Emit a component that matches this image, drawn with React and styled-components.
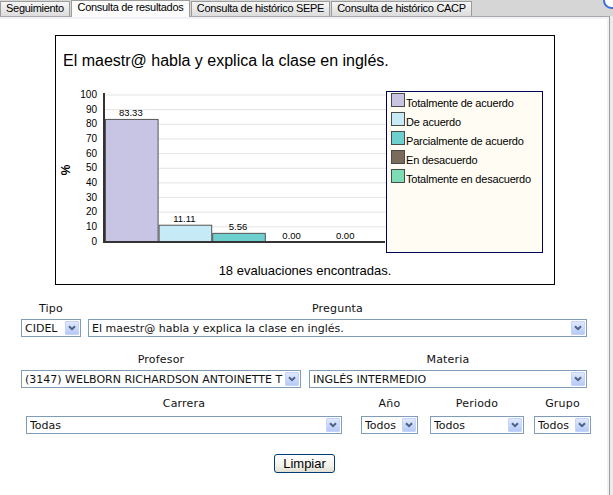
import React from 'react'
import styled, { createGlobalStyle } from 'styled-components'

const GlobalStyle = createGlobalStyle`
  body {
    margin: 0;
    background: #ececec;
  }
`

const Page = styled.div`
  position: relative;
  width: 613px;
  height: 495px;
  overflow: hidden;
  background: #ececec;
  font-family: "Liberation Sans", Arial, sans-serif;
`

const TabBar = styled.div`
  position: relative;
  display: flex;
  align-items: flex-end;
  gap: 1px;
  height: 16px;
  background: #d6d6d6;
`

const Tab = styled.div`
  position: relative;
  z-index: ${p => (p.$active ? 2 : 1)};
  box-sizing: border-box;
  width: ${p => p.$w}px;
  height: ${p => (p.$active ? 17 : 15)}px;
  margin-bottom: ${p => (p.$active ? -1 : 0)}px;
  border: 1px solid #9c9c9c;
  border-bottom: none;
  background: ${p => (p.$active ? '#fbfbfb' : 'linear-gradient(#f6f6f6, #dcdcdc)')};
  font-size: 11px;
  line-height: 12px;
  letter-spacing: -0.3px;
  text-align: center;
  white-space: nowrap;
  color: #000;
`

// the round corner of a window button peeking in at top right
const CornerBadge = styled.span`
  position: absolute;
  top: -8px;
  right: -7px;
  width: 13px;
  height: 13px;
  border-radius: 50%;
  border: 2px solid #3f72d6;
  background: #fff;
`

const Panel = styled.div`
  box-sizing: border-box;
  width: 610px;
  height: 479px;
  display: flex;
  flex-direction: column;
  background: #fff;
  border-top: 1px solid #a8a8a8;
  border-right: 1px solid #9c9c9c;
  box-shadow: inset 0 2px 0 #f1f1fa, inset -2px 0 0 #f1f1fa;
`

const ChartBox = styled.div`
  box-sizing: border-box;
  width: 500px;
  height: 250px;
  margin: 18px 0 0 55px;
  border: 1px solid #000;
  display: flex;
  flex-direction: column;
`

const ChartTitle = styled.div`
  margin: 16px 0 0 7px;
  font-size: 16px;
  line-height: 18px;
  color: #000;
`

const PlotRow = styled.div`
  display: flex;
  height: 168px;
  margin-top: 15px;
`

const Legend = styled.div`
  box-sizing: border-box;
  width: 157px;
  height: 162px;
  margin-top: 6px;
  padding: 1px 0 0 4px;
  border: 1px solid #00005a;
  background: #fffcf3;
`

const LegendItem = styled.div`
  display: flex;
  align-items: flex-start;
  height: 19px;
`

const Swatch = styled.span`
  box-sizing: border-box;
  width: 14px;
  height: 14px;
  border: 1px solid #4a4a4a;
  background: ${p => p.$color};
`

const LegendText = styled.span`
  margin: 4px 0 0 1px;
  font-size: 11px;
  line-height: 13px;
  letter-spacing: -0.2px;
  color: #000;
`

const Caption = styled.div`
  margin-top: 10px;
  font-size: 13px;
  line-height: 15px;
  text-align: center;
  color: #000;
`

const Form = styled.div`
  display: flex;
  flex-direction: column;
  margin-top: 17px;
`

const Row = styled.div`
  display: flex;
  gap: ${p => p.$gap || 0}px;
  margin-top: ${p => p.$mt || 0}px;
  padding-left: ${p => p.$pl}px;
`

const Field = styled.div`
  display: flex;
  flex-direction: column;
  align-items: center;
  gap: ${p => p.$gap}px;
  margin-left: ${p => p.$ml || 0}px;
`

const FieldLabel = styled.div`
  font-family: "DejaVu Sans", Verdana, sans-serif;
  font-size: 11px;
  line-height: 13px;
  letter-spacing: 0.2px;
  color: #111;
`

const SelectBox = styled.div`
  box-sizing: border-box;
  display: flex;
  align-items: center;
  width: ${p => p.$w}px;
  height: 18px;
  padding: 0 1px 0 3px;
  border: 1px solid #7f9db9;
  background: #fff;
  font-family: "DejaVu Sans", Verdana, sans-serif;
  font-size: 11px;
  line-height: 13px;
  letter-spacing: 0;
  color: #111;
`

const SelectText = styled.span`
  flex: 1;
  min-width: 0;
  overflow: hidden;
  white-space: nowrap;
`

const DropButton = styled.span`
  box-sizing: border-box;
  flex: none;
  display: flex;
  align-items: center;
  justify-content: center;
  width: 14px;
  height: 14px;
  border: 1px solid #c3d3fd;
  border-radius: 1px;
  background: linear-gradient(#dfe8fe, #b6caf7);
`

const ButtonRow = styled.div`
  display: flex;
  justify-content: center;
  margin-top: 20px;
`

const Button = styled.button`
  box-sizing: border-box;
  width: 61px;
  height: 19px;
  padding: 0;
  border: 1px solid #003c74;
  border-radius: 3px;
  background: linear-gradient(#ffffff, #f3f2ec 60%, #e2dfd2);
  font-family: "Liberation Sans", Arial, sans-serif;
  font-size: 13px;
  line-height: 15px;
  color: #000;
`

const series = [
  { label: 'Totalmente de acuerdo', value: 83.33, color: '#c8c4e4' },
  { label: 'De acuerdo', value: 11.11, color: '#c6eaf6' },
  { label: 'Parcialmente de acuerdo', value: 5.56, color: '#6ecfcf' },
  { label: 'En desacuerdo', value: 0, color: '#7b6b5a' },
  { label: 'Totalmente en desacuerdo', value: 0, color: '#7ddcb4' },
]

const ZERO = 156
const UNIT = 1.465
const AXIS_X = 48
const BAR_W = 53.6

const Chevron = () => (
  <svg width="8" height="6" viewBox="0 0 8 6">
    <path d="M1 1.2 L4 4.2 L7 1.2" fill="none" stroke="#4d6185" strokeWidth="2" />
  </svg>
)

const Select = ({ w, children }) => (
  <SelectBox $w={w}>
    <SelectText>{children}</SelectText>
    <DropButton>
      <Chevron />
    </DropButton>
  </SelectBox>
)

const BarChart = () => {
  const ticks = [0, 10, 20, 30, 40, 50, 60, 70, 80, 90, 100]
  return (
    <svg width="330" height="168" fontFamily='"Liberation Sans", Arial, sans-serif'>
      {ticks.slice(1).map(t => (
        <line key={t} x1={AXIS_X} x2="330" y1={ZERO - t * UNIT + 0.5} y2={ZERO - t * UNIT + 0.5} stroke="#e4e4e4" />
      ))}
      {ticks.map(t => (
        <text key={t} x="41" y={ZERO - t * UNIT + 3.5} fontSize="10" textAnchor="end" fill="#000">
          {t}
        </text>
      ))}
      <text x="14" y="85" fontSize="12" fontWeight="bold" textAnchor="middle" transform="rotate(-90 14 85)">
        %
      </text>
      {series.map((s, i) => {
        const x = AXIS_X + 1 + i * BAR_W
        const h = s.value * UNIT
        return (
          <g key={s.label}>
            {h > 0 && (
              <rect x={x + 0.5} y={ZERO - h + 0.5} width={BAR_W - 1} height={h} fill={s.color} stroke="#555" />
            )}
            <text x={x + BAR_W / 2 - 1} y={ZERO - h - 2.5} fontSize="9.5" textAnchor="middle" fill="#000">
              {s.value.toFixed(2)}
            </text>
          </g>
        )
      })}
      <rect x={AXIS_X - 1} y="8" width="2" height="150" fill="#333" />
      <rect x={AXIS_X - 1} y={ZERO} width={330 - AXIS_X} height="2" fill="#333" />
    </svg>
  )
}

const tabs = [
  { label: 'Seguimiento', w: 70 },
  { label: 'Consulta de resultados', w: 119, active: true },
  { label: 'Consulta de histórico SEPE', w: 139 },
  { label: 'Consulta de histórico CACP', w: 141 },
]

const App = () => (
  <Page>
    <GlobalStyle />
    <TabBar>
      {tabs.map(t => (
        <Tab key={t.label} $w={t.w} $active={t.active}>
          {t.label}
        </Tab>
      ))}
      <CornerBadge />
    </TabBar>
    <Panel>
      <ChartBox>
        <ChartTitle>El maestr@ habla y explica la clase en inglés.</ChartTitle>
        <PlotRow>
          <BarChart />
          <Legend>
            {series.map(s => (
              <LegendItem key={s.label}>
                <Swatch $color={s.color} />
                <LegendText>{s.label}</LegendText>
              </LegendItem>
            ))}
          </Legend>
        </PlotRow>
        <Caption>18 evaluaciones encontradas.</Caption>
      </ChartBox>

      <Form>
        <Row $pl={21} $gap={7}>
          <Field $gap={4}>
            <FieldLabel>Tipo</FieldLabel>
            <Select w={60}>CIDEL</Select>
          </Field>
          <Field $gap={4}>
            <FieldLabel>Pregunta</FieldLabel>
            <Select w={499}>El maestr@ habla y explica la clase en inglés.</Select>
          </Field>
        </Row>
        <Row $pl={21} $gap={8} $mt={16}>
          <Field $gap={4}>
            <FieldLabel>Profesor</FieldLabel>
            <Select w={280}>(3147) WELBORN RICHARDSON ANTOINETTE T</Select>
          </Field>
          <Field $gap={4}>
            <FieldLabel>Materia</FieldLabel>
            <Select w={278}>INGLÉS INTERMEDIO</Select>
          </Field>
        </Row>
        <Row $pl={26} $mt={9}>
          <Field $gap={6}>
            <FieldLabel>Carrera</FieldLabel>
            <Select w={316}>Todas</Select>
          </Field>
          <Field $gap={6} $ml={19}>
            <FieldLabel>Año</FieldLabel>
            <Select w={57}>Todos</Select>
          </Field>
          <Field $gap={6} $ml={12}>
            <FieldLabel>Periodo</FieldLabel>
            <Select w={94}>Todos</Select>
          </Field>
          <Field $gap={6} $ml={10}>
            <FieldLabel>Grupo</FieldLabel>
            <Select w={57}>Todos</Select>
          </Field>
        </Row>
        <ButtonRow>
          <Button type="button">Limpiar</Button>
        </ButtonRow>
      </Form>
    </Panel>
  </Page>
)

export default App
